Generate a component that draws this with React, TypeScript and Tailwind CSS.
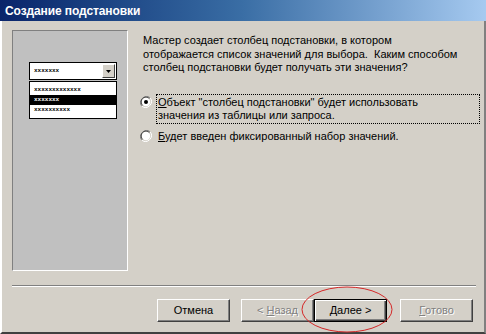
import React from "react";

const font = { fontFamily: '"Liberation Sans", Arial, sans-serif' };

function Radio({ checked }: { checked?: boolean }) {
  return (
    <svg width="12" height="12" viewBox="0 0 12 12" className="shrink-0">
      <path d="M10.2 1.8 A6 6 0 0 0 1.8 10.2" fill="none" stroke="#808080" strokeWidth="1" />
      <path d="M9.4 2.6 A4.8 4.8 0 0 0 2.6 9.4" fill="none" stroke="#404040" strokeWidth="1" />
      <path d="M1.8 10.2 A6 6 0 0 0 10.2 1.8" fill="none" stroke="#ffffff" strokeWidth="1" />
      <circle cx="6" cy="6" r="4.2" fill="#ffffff" />
      {checked && <circle cx="6" cy="6" r="2" fill="#000000" />}
    </svg>
  );
}

function Btn({
  children,
  disabled,
  isDefault,
}: {
  children: React.ReactNode;
  disabled?: boolean;
  isDefault?: boolean;
}) {
  return (
    <div
      className={
        "w-[73px] h-[23px] flex items-center justify-center text-[11px] bg-[#d4d0c8] " +
        (isDefault
          ? "border border-black shadow-[inset_1px_1px_#ffffff,inset_-1px_-1px_#404040,inset_-2px_-2px_#808080]"
          : "border border-t-white border-l-white border-b-[#404040] border-r-[#404040] shadow-[inset_-1px_-1px_#808080]") +
        (disabled ? " text-[#808080] [text-shadow:1px_1px_0_#ffffff]" : " text-black")
      }
    >
      {children}
    </div>
  );
}

export default function App() {
  return (
    <div className="w-[486px] h-[334px] flex flex-col bg-[#d4d0c8] overflow-hidden relative" style={font}>
      <div className="h-[21px] shrink-0 flex items-center pl-[5px] bg-gradient-to-r from-[#0a246a] via-[#3a6ea5] to-[#a6caf0]">
        <span className="text-white font-bold text-[12px] tracking-[-0.1px]">Создание подстановки</span>
      </div>

      <div className="flex-1 flex flex-col border-l-2 border-l-white border-r-2 border-r-[#808080] border-b-2 border-b-[#404040]">
        <div className="flex pt-[9px] pl-[10px]">
          <div className="w-[116px] h-[241px] shrink-0 bg-[#c0c0c0] border border-t-[#808080] border-l-[#808080] border-b-white border-r-white pt-[31px] pl-[16px]">
            <div className="w-[88px]">
              <div className="h-[18px] bg-white border border-black flex items-center justify-between pl-[4px] pr-[1px]">
                <span className="text-[6px] font-bold leading-none" style={{ fontFamily: '"Liberation Mono", monospace' }}>
                  xxxxxxx
                </span>
                <div className="w-[13px] h-[14px] bg-[#d4d0c8] border border-t-white border-l-white border-b-[#404040] border-r-[#404040] flex items-center justify-center">
                  <svg width="5" height="3" viewBox="0 0 5 3">
                    <path d="M0 0H5L2.5 3Z" fill="#000" />
                  </svg>
                </div>
              </div>
              <div className="mt-[1px] bg-white border border-black py-[3px] flex flex-col" style={{ fontFamily: '"Liberation Mono", monospace' }}>
                <div className="h-[10px] flex items-center pl-[4px] text-[6px] font-bold leading-none">xxxxxxxxxxxxx</div>
                <div className="h-[10px] flex items-center pl-[4px] text-[6px] font-bold leading-none bg-black text-white">xxxxxxx</div>
                <div className="h-[10px] flex items-center pl-[4px] text-[6px] font-bold leading-none">xxxxxxxxxx</div>
              </div>
            </div>
          </div>

          <div className="flex flex-col pl-[15px] pt-[4px] text-[11px] leading-[13.5px] text-black">
            <div className="whitespace-nowrap">
              <div>Мастер создает столбец подстановки, в котором</div>
              <div>отображается список значений для выбора.&nbsp; Каким способом</div>
              <div>столбец подстановки будет получать эти значения?</div>
            </div>

            <div className="mt-[19px] flex items-start -ml-[3px]">
              <div className="pt-[2px]">
                <Radio checked />
              </div>
              <div className="ml-[4px] w-[324px] border border-dotted border-black px-[1px] leading-[13px] py-[1px]">
                <div>
                  <span className="underline">О</span>бъект "столбец подстановки" будет использовать
                </div>
                <div>значения из таблицы или запроса.</div>
              </div>
            </div>

            <div className="mt-[6px] flex items-center -ml-[3px]">
              <Radio />
              <div className="ml-[5px] px-[1px]">
                <span className="underline">Б</span>удет введен фиксированный набор значений.
              </div>
            </div>
          </div>
        </div>

        <div className="mt-[14px] ml-[10px] mr-[8px] h-[2px] border-t border-t-[#808080] border-b border-b-white" />

        <div className="flex pt-[12px] pl-[155px]">
          <Btn>Отмена</Btn>
          <div className="ml-[11px]">
            <Btn disabled>
              &lt; <span className="underline ml-[3px]">Н</span>азад
            </Btn>
          </div>
          <Btn isDefault>
            <span className="underline">Д</span>алее &gt;
          </Btn>
          <div className="ml-[13px]">
            <Btn disabled>
              <span className="underline">Г</span>отово
            </Btn>
          </div>
        </div>
      </div>

      <svg className="absolute left-0 top-0 pointer-events-none" width="486" height="334">
        <ellipse cx="347" cy="309.5" rx="45" ry="22.5" fill="none" stroke="#d42828" strokeWidth="1" />
      </svg>
    </div>
  );
}
